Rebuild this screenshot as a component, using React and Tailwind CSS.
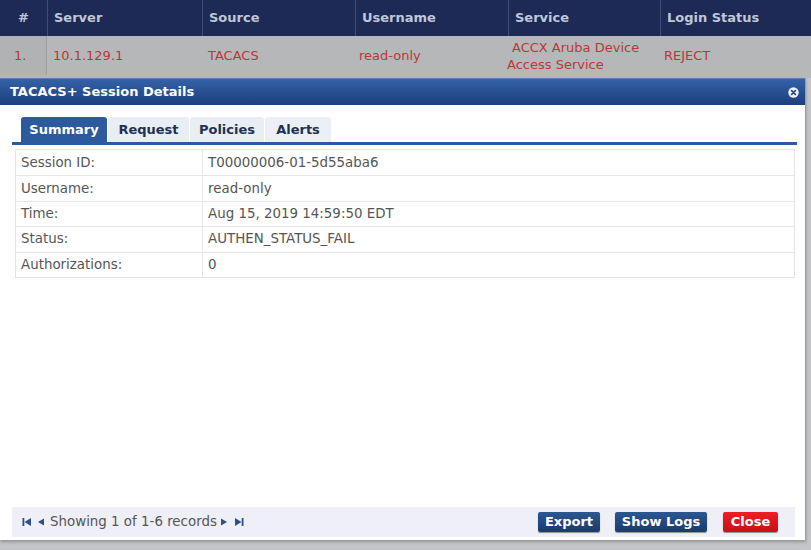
import React from "react";

const cols = [
  { label: "#", w: "w-[47px]", center: true },
  { label: "Server", w: "w-[155px]" },
  { label: "Source", w: "w-[153px]" },
  { label: "Username", w: "w-[153px]" },
  { label: "Service", w: "w-[152px]" },
  { label: "Login Status", w: "flex-1" },
];

const details = [
  ["Session ID:", "T00000006-01-5d55aba6"],
  ["Username:", "read-only"],
  ["Time:", "Aug 15, 2019 14:59:50 EDT"],
  ["Status:", "AUTHEN_STATUS_FAIL"],
  ["Authorizations:", "0"],
];

function First() {
  return (
    <svg width="10" height="10" viewBox="0 0 10 10">
      <rect x="0.5" y="1" width="1.8" height="8" fill="#2f4f86" />
      <path d="M9 1 L2.5 5 L9 9 Z" fill="#2f4f86" />
    </svg>
  );
}
function Prev() {
  return (
    <svg width="8" height="10" viewBox="0 0 8 10">
      <path d="M7 1.5 L1 5 L7 8.5 Z" fill="#2f4f86" />
    </svg>
  );
}
function Next() {
  return (
    <svg width="8" height="10" viewBox="0 0 8 10">
      <path d="M1 1.5 L7 5 L1 8.5 Z" fill="#2f4f86" />
    </svg>
  );
}
function Last() {
  return (
    <svg width="10" height="10" viewBox="0 0 10 10">
      <path d="M1 1 L7.5 5 L1 9 Z" fill="#2f4f86" />
      <rect x="7.7" y="1" width="1.8" height="8" fill="#2f4f86" />
    </svg>
  );
}

export default function App() {
  return (
    <div className="w-[811px] h-[550px] overflow-hidden bg-[#c4c5c8] font-['DejaVu_Sans',sans-serif] flex flex-col">
      {/* dimmed list behind the dialog */}
      <div className="flex h-[36px] bg-[#1c2a55] text-[#c0c7d8] text-[13px] font-bold">
        {cols.map((c, i) => (
          <div
            key={c.label}
            className={`${c.w} flex items-center ${c.center ? "justify-center" : "pl-[6px]"} ${i > 0 ? "border-l border-[#3d4d78]" : ""}`}
          >
            {c.label}
          </div>
        ))}
      </div>
      <div className="flex h-[42px] bg-[#b6b7b9] text-[#b8373a] text-[13px] pb-[3px]">
        <div className="w-[47px] pl-[14px] flex items-center border-r border-[#9fa0a3] bg-[#b1b2b4]">1.</div>
        <div className="w-[155px] pl-[6px] flex items-center">10.1.129.1</div>
        <div className="w-[153px] pl-[6px] flex items-center">TACACS</div>
        <div className="w-[153px] pl-[4px] flex items-center">read-only</div>
        <div className="w-[152px] flex flex-col justify-center leading-[17px]">
          <span className="pl-[4px]">ACCX Aruba Device</span>
          <span className="-ml-[1px]">Access Service</span>
        </div>
        <div className="flex-1 pl-[4px] flex items-center">REJECT</div>
      </div>

      {/* dialog */}
      <div className="w-[806px] h-[462px] flex flex-col bg-white border-r border-[#9a9ca0] shadow-[0_2px_3px_rgba(0,0,0,0.25)]">
        <div className="h-[27px] flex items-center justify-between px-[10px] bg-gradient-to-b from-[#3462a8] to-[#1d3f7c] border-t border-[#5a7fbd]">
          <span className="text-white text-[13px] font-bold">TACACS+ Session Details</span>
          <svg width="11" height="11" viewBox="0 0 11 11" className="mr-[-4px]">
            <circle cx="5.5" cy="5.5" r="5.2" fill="#eef1f7" />
            <path d="M3.6 3.6 L7.4 7.4 M7.4 3.6 L3.6 7.4" stroke="#27498a" strokeWidth="1.6" strokeLinecap="round" />
          </svg>
        </div>

        <div className="flex-1 flex flex-col pl-[12px] pr-[10px] pt-[12px] pb-[3px] text-[13.4px]">
          <div className="flex pl-[9px] gap-[1px] text-[13px] font-bold">
            <div className="w-[86px] h-[25px] flex items-center justify-center bg-[#2c5a9c] text-white rounded-t-[3px]">Summary</div>
            <div className="w-[81px] h-[25px] flex items-center justify-center bg-[#e9edf4] text-[#1f3150] rounded-t-[3px]">Request</div>
            <div className="w-[74px] h-[25px] flex items-center justify-center bg-[#e9edf4] text-[#1f3150] rounded-t-[3px]">Policies</div>
            <div className="w-[66px] h-[25px] flex items-center justify-center bg-[#eceff5] text-[#1f3150] rounded-t-[3px]">Alerts</div>
          </div>
          <div className="h-[3px] bg-[#2c5a9c] mr-[-2px]"></div>

          <div className="mt-[4px] ml-[3px] border border-[#e3e4e6] text-[#555]">
            {details.map(([k, v], i) => (
              <div key={k} className={`flex h-[25.4px] items-center ${i > 0 ? "border-t border-[#e6e7e9]" : ""}`}>
                <div className="w-[187px] h-full flex items-center pl-[5px] border-r border-[#e6e7e9]">{k}</div>
                <div className="flex-1 pl-[5px]">{v}</div>
              </div>
            ))}
          </div>

          <div className="mt-auto h-[30px] flex items-center justify-between bg-[#efeff8] pl-[10px] pr-[17px]">
            <div className="flex items-center text-[#555]">
              <First />
              <span className="ml-[5px]"><Prev /></span>
              <span className="ml-[5px]">Showing 1 of 1-6 records</span>
              <span className="ml-[3px]"><Next /></span>
              <span className="ml-[6px]"><Last /></span>
            </div>
            <div className="flex items-center text-[13px] font-bold text-white">
              <button className="w-[62px] h-[20px] rounded-[2px] bg-gradient-to-b from-[#2d5791] to-[#193b6e] shadow-[0_1px_1px_rgba(0,0,0,0.4)]">Export</button>
              <button className="ml-[15px] w-[92px] h-[20px] rounded-[2px] bg-gradient-to-b from-[#2d5791] to-[#193b6e] shadow-[0_1px_1px_rgba(0,0,0,0.4)]">Show Logs</button>
              <button className="ml-[16px] w-[55px] h-[20px] rounded-[2px] bg-gradient-to-b from-[#ef1e26] to-[#c80f16] shadow-[0_1px_1px_rgba(0,0,0,0.4)]">Close</button>
            </div>
          </div>
        </div>
      </div>
    </div>
  );
}
